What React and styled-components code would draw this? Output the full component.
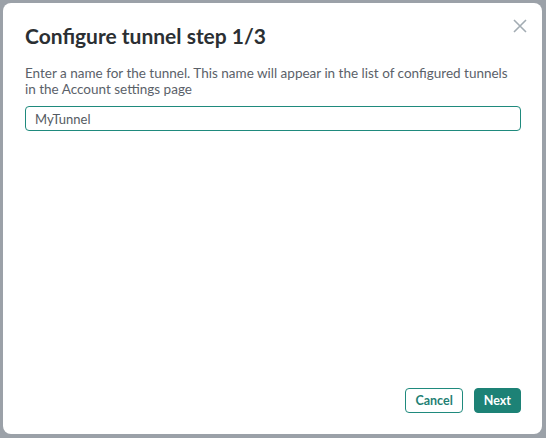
import React, { useState } from 'react';
import styled, { createGlobalStyle } from 'styled-components';

const GlobalStyle = createGlobalStyle`
  html, body {
    margin: 0;
    padding: 0;
    background: #9ba1a8;
    font-family: "Lato", "Noto Sans", sans-serif;
  }
`;

const App = () => {
  const [name, setName] = useState('MyTunnel');

  return (
    <Backdrop>
      <GlobalStyle />
      <Dialog>
        <CloseButton aria-label="Close">
          <svg width="14" height="14" viewBox="0 0 14 14">
            <path d="M1 1 L13 13 M13 1 L1 13" stroke="#a3acb3" strokeWidth="1.6" />
          </svg>
        </CloseButton>
        <Title>Configure tunnel step 1/3</Title>
        <Description>
          Enter a name for the tunnel. This name will appear in the list of configured tunnels
          in the Account settings page
        </Description>
        <NameInput value={name} onChange={(e) => setName(e.target.value)} autoFocus />
        <Footer>
          <OutlineButton>Cancel</OutlineButton>
          <PrimaryButton>Next</PrimaryButton>
        </Footer>
      </Dialog>
    </Backdrop>
  );
};

export default App;

const Backdrop = styled.div`
  width: 546px;
  height: 438px;
  padding: 3px 4px 4px 3px;
  box-sizing: border-box;
  display: flex;
`;

const Dialog = styled.div`
  position: relative;
  flex: 1;
  background: #fff;
  border-radius: 8px;
  display: flex;
  flex-direction: column;
  padding: 20px 21px 21px 22px;
  box-sizing: border-box;
`;

const CloseButton = styled.button`
  position: absolute;
  top: 16px;
  right: 15px;
  background: transparent;
  border: none;
  padding: 0;
  cursor: pointer;
  line-height: 0;
`;

const Title = styled.h2`
  margin: 0;
  font-size: 21px;
  font-weight: 700;
  color: #2b2f33;
  line-height: 26px;
`;

const Description = styled.p`
  margin: 16px 0 0;
  font-size: 13.5px;
  line-height: 16px;
  color: #5b6169;
`;

const NameInput = styled.input`
  margin-top: 9px;
  height: 25px;
  box-sizing: border-box;
  border: 1px solid #1f8a7d;
  border-radius: 4px;
  padding: 0 9px;
  font-family: inherit;
  font-size: 13px;
  color: #555b62;
  caret-color: #222;
  outline: none;
`;

const Footer = styled.div`
  margin-top: auto;
  display: flex;
  justify-content: flex-end;
  gap: 11px;
`;

const OutlineButton = styled.button`
  height: 25px;
  padding: 0 9px;
  background: #fff;
  border: 1px solid #1f8a7d;
  border-radius: 4px;
  color: #1f7f74;
  font-family: inherit;
  font-size: 12.5px;
  font-weight: 700;
  cursor: pointer;
`;

const PrimaryButton = styled(OutlineButton)`
  background: #1d8276;
  border-color: #1d8276;
  color: #fff;
`;
